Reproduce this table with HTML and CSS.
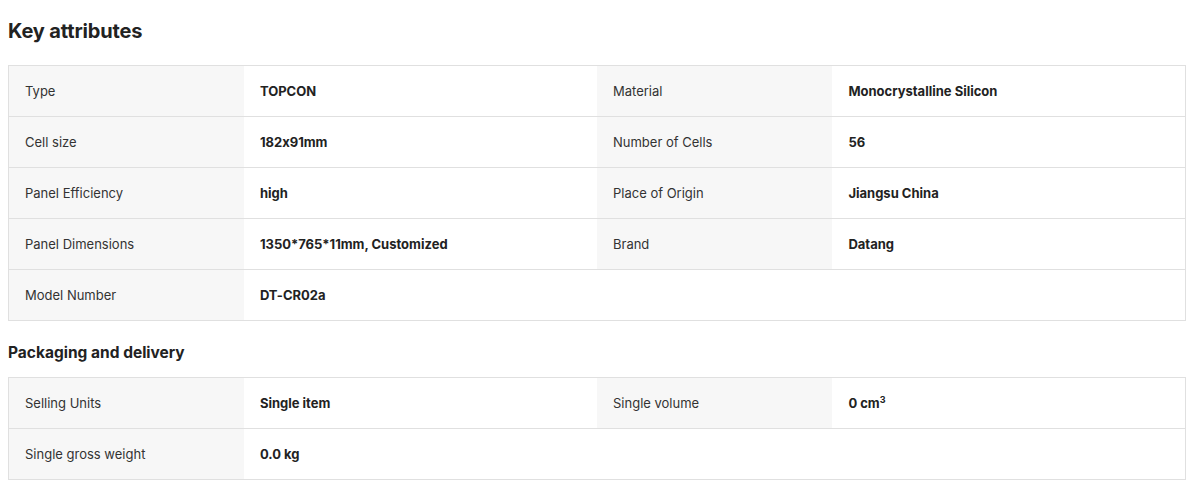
FILE: index.html
```html
<!DOCTYPE html>
<html>
<head>
<meta charset="utf-8">
<link rel="stylesheet" href="styles.css">
</head>
<body>
<div class="page">
  <h2 class="title">Key attributes</h2>
  <table class="attrs">
    <colgroup><col class="c-label"><col class="c-value"><col class="c-label"><col class="c-value"></colgroup>
    <tr><td class="label">Type</td><td class="value">TOPCON</td><td class="label">Material</td><td class="value">Monocrystalline Silicon</td></tr>
    <tr><td class="label">Cell size</td><td class="value">182x91mm</td><td class="label">Number of Cells</td><td class="value">56</td></tr>
    <tr><td class="label">Panel Efficiency</td><td class="value">high</td><td class="label">Place of Origin</td><td class="value">Jiangsu China</td></tr>
    <tr><td class="label">Panel Dimensions</td><td class="value">1350*765*11mm, Customized</td><td class="label">Brand</td><td class="value">Datang</td></tr>
    <tr><td class="label">Model Number</td><td class="value">DT-CR02a</td><td class="blank"></td><td class="blank"></td></tr>
  </table>
  <h3 class="subtitle">Packaging and delivery</h3>
  <table class="attrs">
    <colgroup><col class="c-label"><col class="c-value"><col class="c-label"><col class="c-value"></colgroup>
    <tr><td class="label">Selling Units</td><td class="value">Single item</td><td class="label">Single volume</td><td class="value">0 cm<sup>3</sup></td></tr>
    <tr><td class="label">Single gross weight</td><td class="value">0.0 kg</td><td class="blank"></td><td class="blank"></td></tr>
  </table>
</div>
</body>
</html>
```

FILE: styles.css
```css
* { box-sizing: border-box; }
html, body { margin: 0; padding: 0; background: #fff; }
body {
  font-family: Inter, "Open Sans", Arial, sans-serif;
  font-feature-settings: "calt" 0;
  color: #222;
}
.page { padding: 17px 11px 0 8px; }
.title {
  margin: 0 0 20px;
  font-size: 20px;
  line-height: 28px;
  font-weight: 700;
  letter-spacing: -0.15px;
  color: #222;
}
.subtitle {
  margin: 20px 0 12px;
  font-size: 15.5px;
  line-height: 24px;
  font-weight: 700;
  color: #222;
}
.attrs {
  width: 100%;
  border-collapse: collapse;
  table-layout: fixed;
  border: 1px solid #e0e0e0;
}
.c-label { width: 20%; }
.c-value { width: 30%; }
.attrs td {
  height: 51px;
  padding: 0 16px;
  font-size: 13px;
  line-height: 20px;
  border-top: 1px solid #e0e0e0;
  border-bottom: 1px solid #e0e0e0;
  vertical-align: middle;
}
.attrs .label { background: #f7f7f7; font-weight: 400; color: #333; }
.attrs .value { background: #fff; font-weight: 700; color: #222; }
.attrs .blank { background: #fff; }
sup { font-size: 9px; line-height: 0; vertical-align: 5px; }
```
